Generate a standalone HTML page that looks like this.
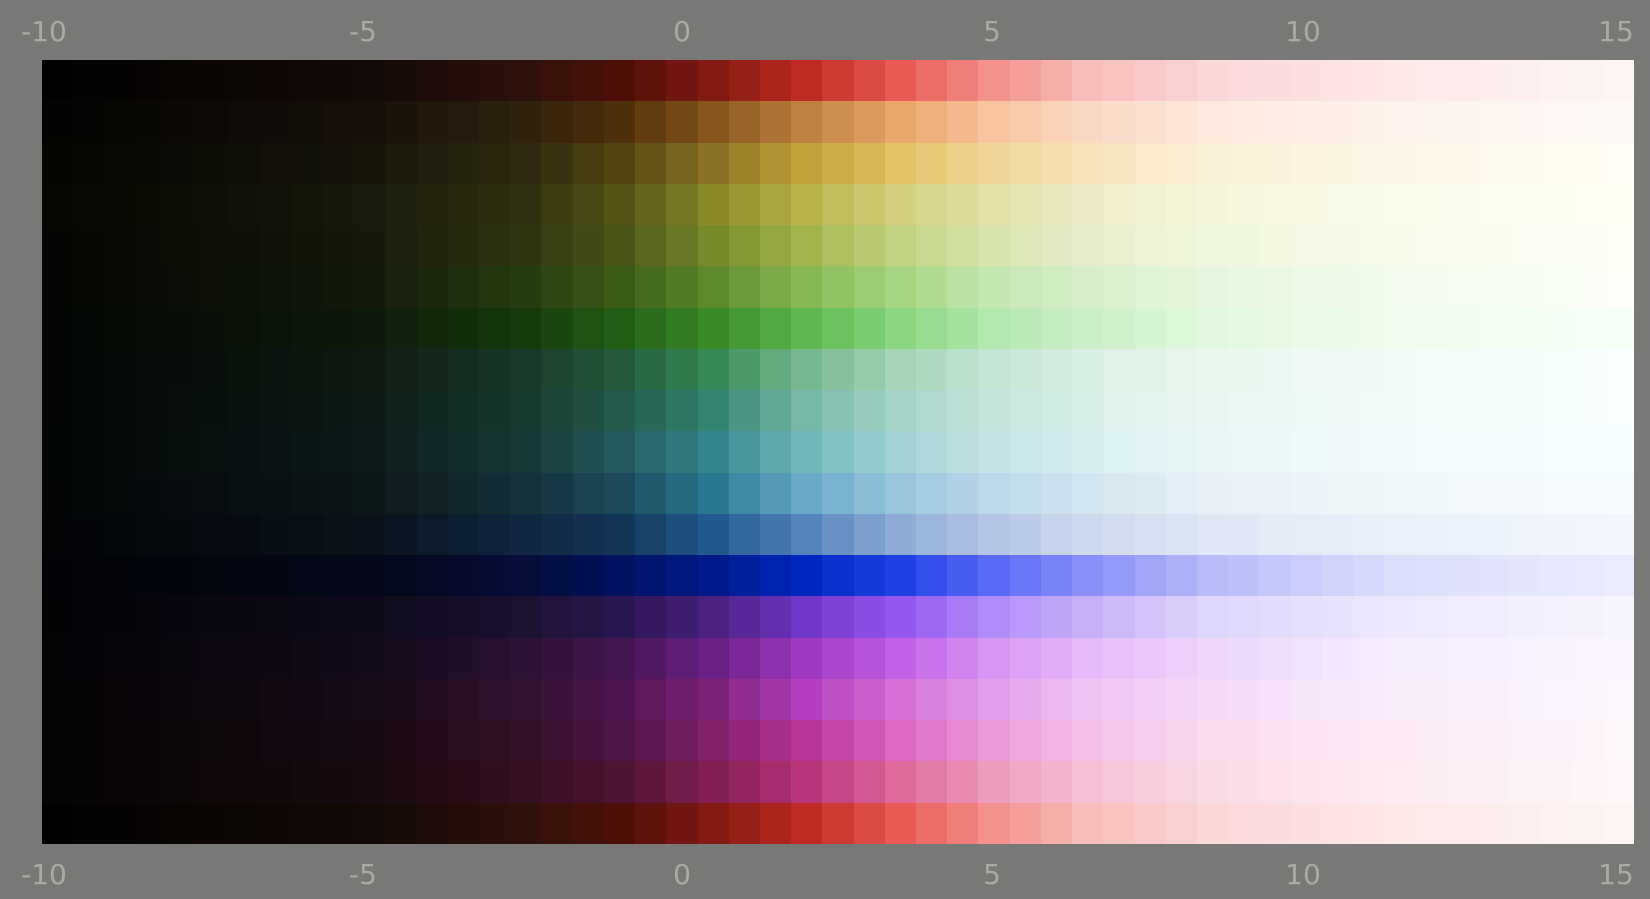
<!DOCTYPE html>
<html><head><meta charset="utf-8">
<style>
html,body{margin:0;padding:0;width:1650px;height:899px;overflow:hidden;background:#787976;}
#g{position:absolute;left:42px;top:60px;width:1592px;height:784px;display:grid;grid-template-columns:repeat(51,1fr);grid-template-rows:repeat(19,1fr);}
.l{position:absolute;font-family:"DejaVu Sans","Liberation Sans",sans-serif;font-weight:normal;font-size:28px;color:#a9aba7;transform:translateX(-50%);line-height:1;}
.t{top:18px}.b{top:861px}
</style></head><body>
<div id="g"></div>
<div class="l t" style="left:44px">-10</div>
<div class="l t" style="left:363px">-5</div>
<div class="l t" style="left:682px">0</div>
<div class="l t" style="left:992px">5</div>
<div class="l t" style="left:1303px">10</div>
<div class="l t" style="left:1616px">15</div>
<div class="l b" style="left:44px">-10</div>
<div class="l b" style="left:363px">-5</div>
<div class="l b" style="left:682px">0</div>
<div class="l b" style="left:992px">5</div>
<div class="l b" style="left:1303px">10</div>
<div class="l b" style="left:1616px">15</div>
<script>
var A=[0,10,15,18,21,24,27,30,33,37,43,50];
var R0="020101 130a07 2f110b 4e0f09 821a13 bf2b22 e95a54 f3918c f8bcbb fbd8d8 fde8e8 fdf4f4";
var rows=[R0,
"030302 171009 2f210d 4e300c 86561c c08240 eba66a f8c49f f9d9c4 fde9de fdf2ec fef9f6",
"050502 17150a 2f2a0f 524511 8a7324 c0a13a e2c466 efd698 f6e4bc faf0d8 fdf6e8 fffdf4",
"060603 191a0b 31310f 555316 8a8a2a b7b44c d3d07e e3e0a8 eeebc8 f6f5dc fbfbec fffff2",
"050603 16190b 2e3510 4b5417 768a2a a3b44e c2d481 d8e4ad e6edcc eff6de f7fbea fcfff6",
"040603 131a0b 263d11 3c5b17 5e8a2c 88b852 a8d582 c4e6b0 d8efcd e6f6de f2fbed fbfff7",
"030603 0e1a0c 163a0c 235e17 3a8a28 5cb84e 8cd682 b2e8ae cbefca e2f8de f0fcee f6fff6",
"030604 0e1a12 19392a 245a3a 368a58 78b890 a5d4b7 c5e4d4 daf0e4 e8f6ee f2fbf6 f8fffc",
"030605 0d1a17 18392f 245a4c 338470 78b8a8 a6d4c8 c5e4dc daefea e8f6f3 f2fbf9 f8fffe",
"030606 0d1a1a 183838 245a5c 34878c 70b8b8 a5d3d4 c5e3e6 d9eef0 e8f6f7 f2fbfc f6ffff",
"030506 0c1719 15313a 1c4a5a 287890 6aaac8 9ac6dc bcd8e8 d4e6f0 e6f0f6 f0f7fb f6fbff",
"030406 0a121b 112640 143656 225a90 5584bc 90acd6 b4c6e4 cdd9ee e0e8f5 eaf0fa f2f6fe",
"020307 050818 060d38 001260 001a8c 0028c0 2040e4 5a6af8 8a8ef8 b7bbf8 dcdffb eaebfc",
"030306 0e0a1a 1c1230 2a1650 4a2080 7038c8 9458f0 b08cf8 c8b0f8 ded6fb ede8fe f6f4fe",
"040306 130a1a 2a1232 441650 6a2086 a038c0 c260e8 d896f4 e5baf8 edd8fa f5ecfe faf5ff",
"050306 170b17 30122e 4e1650 7e2278 b43ebe d470d8 e29eea eec4f2 f4dcf6 f8ecfb fcf6fe",
"050305 170a13 321028 4e1644 82206a b83698 dc68c4 ec9ad8 f4c0e6 f8dcef fbeaf6 fdf6fb",
"050303 180a0f 330f20 4e1434 821e52 b8357a de6a9c ee9cbc f5c0d6 f9dce6 fcecf1 fef6f8",
R0];
function p(h){return [parseInt(h.substr(0,2),16),parseInt(h.substr(2,2),16),parseInt(h.substr(4,2),16)];}
var g=document.getElementById('g'),html='';
for(var r=0;r<19;r++){
 var k=rows[r].split(' ').map(p);
 for(var c=0;c<51;c++){
  var j=0;while(j<A.length-2&&c>A[j+1])j++;
  var t=(c-A[j])/(A[j+1]-A[j]);
  var a=k[j],b=k[j+1];
  var col=[0,1,2].map(function(i){return Math.round(a[i]+(b[i]-a[i])*t);});
  html+='<div style="background:rgb('+col.join(',')+')"></div>';
 }
}
g.innerHTML=html;
</script>
</body></html>
